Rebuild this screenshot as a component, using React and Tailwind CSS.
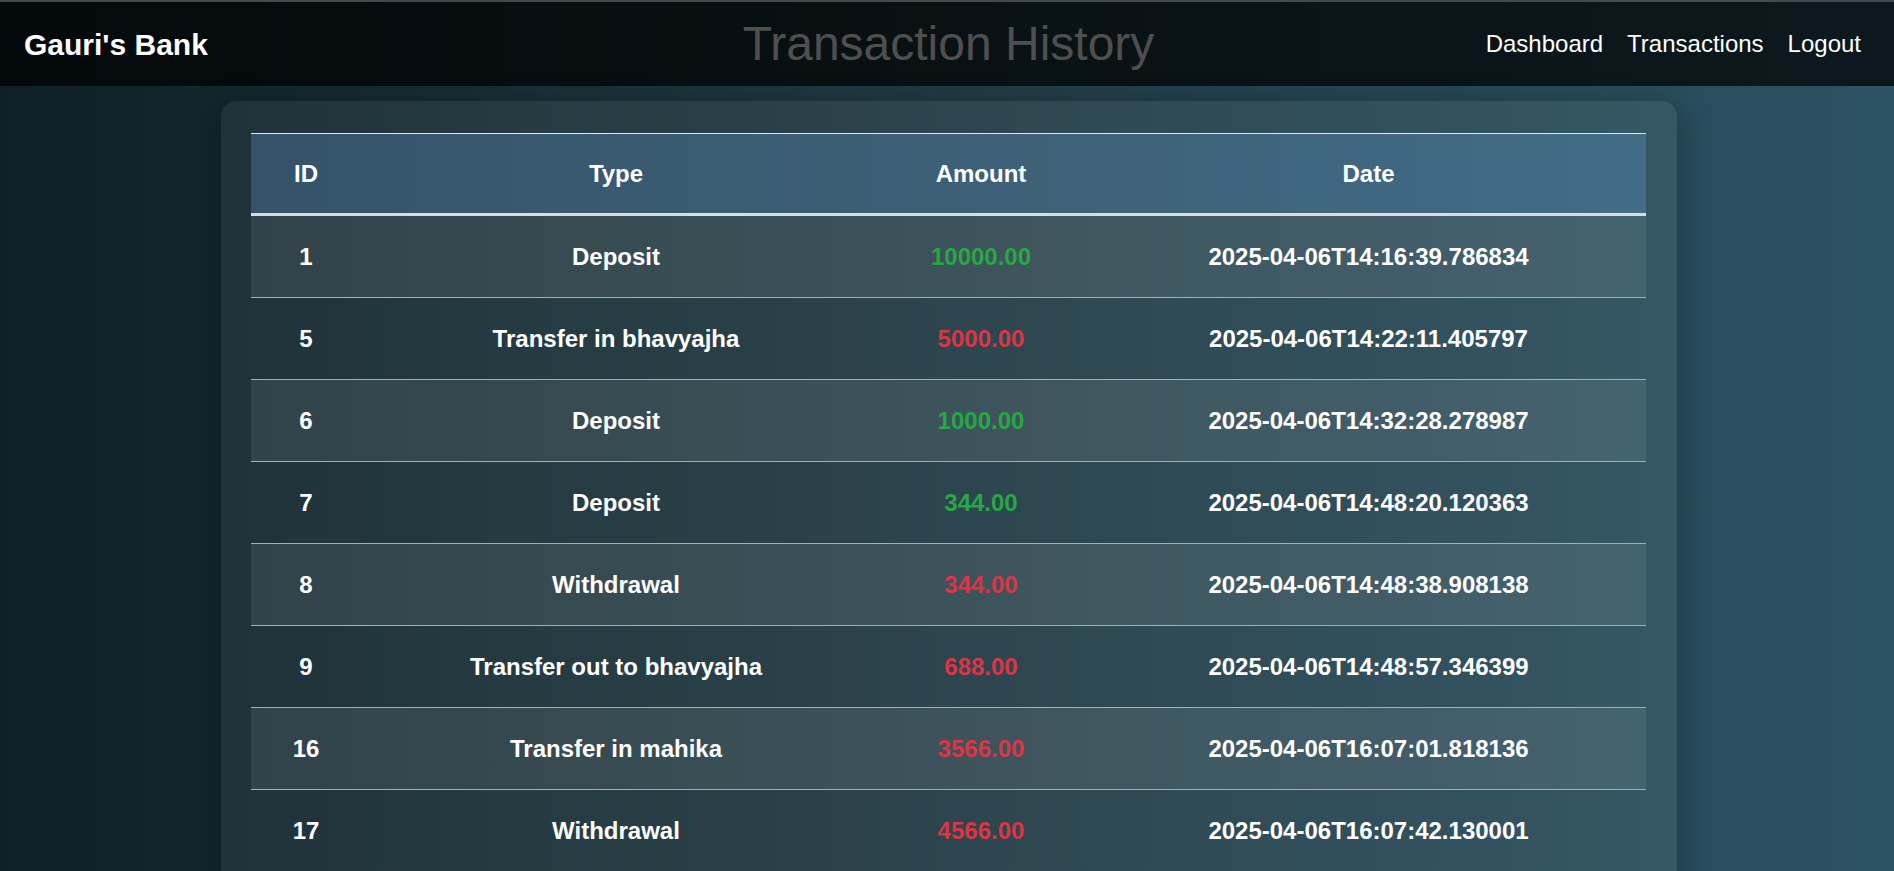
import React from "react"

const transactions = [
    { id: 1, type: "Deposit", amount: "10000.00", credit: true, date: "2025-04-06T14:16:39.786834" },
    { id: 5, type: "Transfer in bhavyajha", amount: "5000.00", credit: false, date: "2025-04-06T14:22:11.405797" },
    { id: 6, type: "Deposit", amount: "1000.00", credit: true, date: "2025-04-06T14:32:28.278987" },
    { id: 7, type: "Deposit", amount: "344.00", credit: true, date: "2025-04-06T14:48:20.120363" },
    { id: 8, type: "Withdrawal", amount: "344.00", credit: false, date: "2025-04-06T14:48:38.908138" },
    { id: 9, type: "Transfer out to bhavyajha", amount: "688.00", credit: false, date: "2025-04-06T14:48:57.346399" },
    { id: 16, type: "Transfer in mahika", amount: "3566.00", credit: false, date: "2025-04-06T16:07:01.818136" },
    { id: 17, type: "Withdrawal", amount: "4566.00", credit: false, date: "2025-04-06T16:07:42.130001" },
]

const cols = "grid grid-cols-[110px_510px_220px_1fr] items-center text-center"

const App = () => {
    return (
        <div className="min-h-screen bg-linear-to-r from-[#0f2027] via-[#203a43] to-[#2c5364] font-['Liberation_Sans',Arial,sans-serif] text-white">
            {/* Navbar */}
            <header className="grid grid-cols-[1fr_auto_1fr] items-center h-[86px] bg-black/70 border-t-2 border-[#45494f] px-6">
                <div className="text-[30px] font-bold">Gauri's Bank</div>
                <h1 className="text-[48px] text-[#4f4f4f] ml-[3px]">Transaction History</h1>
                <nav className="justify-self-end flex gap-6 mr-[9px] text-[24px]">
                    <a href="#">Dashboard</a>
                    <a href="#">Transactions</a>
                    <a href="#">Logout</a>
                </nav>
            </header>

            {/* Table card */}
            <main className="pt-[15px] pb-8">
                <div className="w-[1456px] ml-[221px] rounded-[15px] bg-white/[0.06] pt-8 pb-8 pl-[30px] pr-[31px] shadow-[0_8px_32px_rgba(0,0,0,0.35)]">
                    <div className="text-[24px] font-bold">
                        <div className={`${cols} h-[83px] border-t border-b-[3px] border-t-[#e6e6e6] border-b-[#dcdcdc] bg-[#64a0d7]/30`}>
                            <div>ID</div>
                            <div>Type</div>
                            <div>Amount</div>
                            <div>Date</div>
                        </div>
                        {transactions.map((t, i) => (
                            <div key={t.id} className={`${cols} h-[82px] border-b border-[#7ab8f0] ${i % 2 === 0 ? "bg-white/[0.08]" : ""}`}>
                                <div>{t.id}</div>
                                <div>{t.type}</div>
                                <div className={t.credit ? "text-[#28a745]" : "text-[#dc3545]"}>{t.amount}</div>
                                <div>{t.date}</div>
                            </div>
                        ))}
                    </div>
                </div>
            </main>
        </div>
    )
}

export default App
